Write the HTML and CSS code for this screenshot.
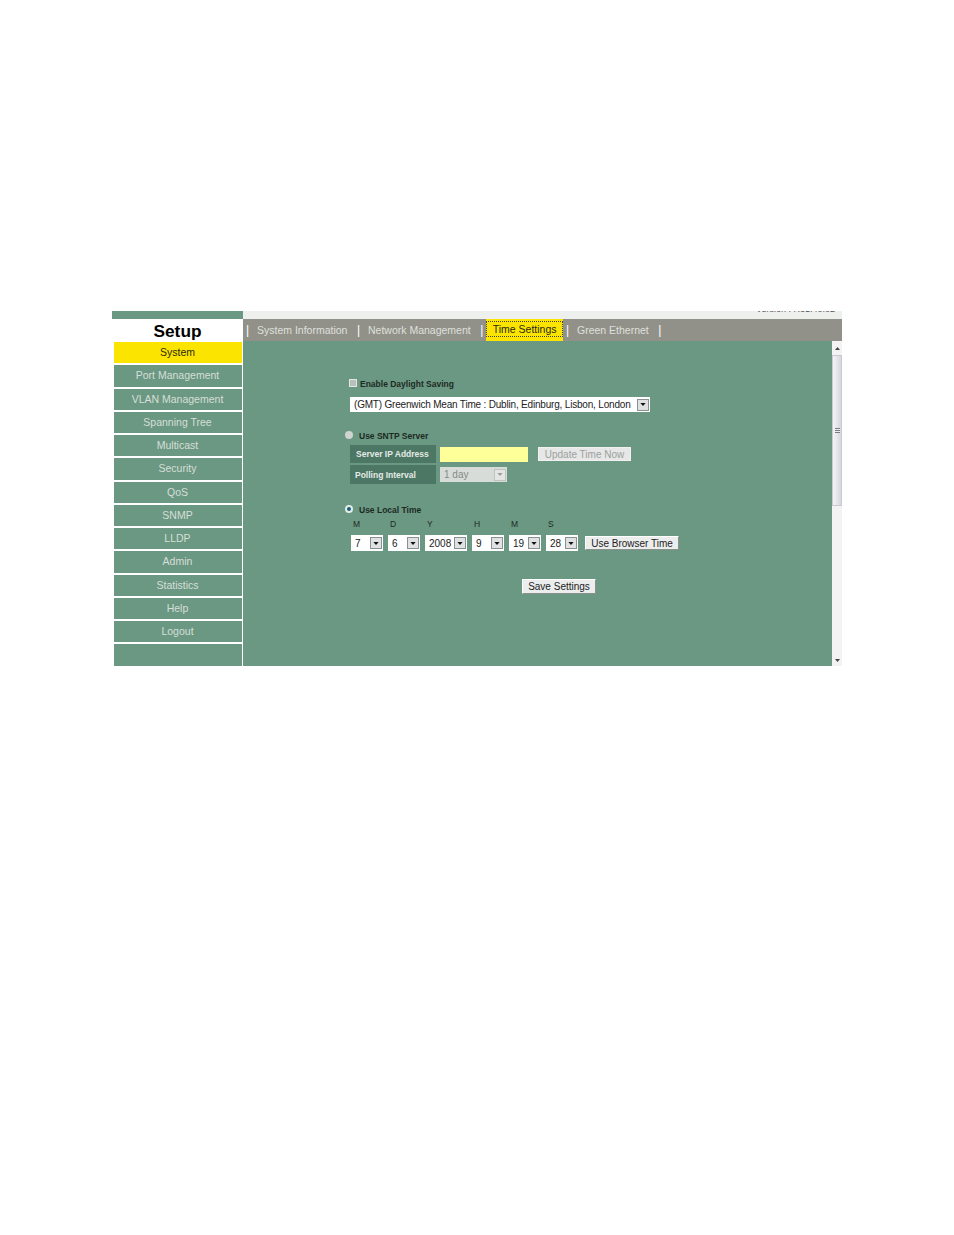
FILE: index.html
```html
<!DOCTYPE html>
<html>
<head>
    <title>Setup - Time Settings</title>
    <link rel="stylesheet" href="styles.css">
</head>
<body>
    <div class="frame">
        <div class="sidebar">
            <div class="side-strip"></div>
            <div class="side-title">Setup</div>
            <a class="side-item active">System</a>
            <a class="side-item">Port Management</a>
            <a class="side-item">VLAN Management</a>
            <a class="side-item">Spanning Tree</a>
            <a class="side-item">Multicast</a>
            <a class="side-item">Security</a>
            <a class="side-item">QoS</a>
            <a class="side-item">SNMP</a>
            <a class="side-item">LLDP</a>
            <a class="side-item">Admin</a>
            <a class="side-item">Statistics</a>
            <a class="side-item">Help</a>
            <a class="side-item">Logout</a>
            <div class="side-rest"></div>
        </div>
        <div class="main">
            <div class="version-strip"><span class="version">Version : R31.40.02</span></div>
            <div class="tabs">
                <span class="sep">|</span>
                <a class="tab">System Information</a>
                <span class="sep">|</span>
                <a class="tab">Network Management</a>
                <span class="sep">|</span>
                <a class="tab tab-active"><span class="tab-focus">Time Settings</span></a>
                <span class="sep">|</span>
                <a class="tab">Green Ethernet</a>
                <span class="sep">|</span>
            </div>
            <div class="body-row">
                <div class="content">
                    <div class="option first-option">
                        <span class="check"></span>
                        <span class="option-label">Enable Daylight Saving</span>
                    </div>
                    <div class="select select-zone">
                        <span class="select-value">(GMT) Greenwich Mean Time : Dublin, Edinburg, Lisbon, London</span>
                        <span class="arrow"><svg viewBox="0 0 7 4"><path d="M0 0h7L3.5 4z"/></svg></span>
                    </div>

                    <div class="option sntp-option">
                        <span class="radio"></span>
                        <span class="option-label">Use SNTP Server</span>
                    </div>
                    <div class="field-row field-server">
                        <div class="field-label">Server IP Address</div>
                        <div class="text-input"></div>
                        <div class="btn btn-disabled btn-update">Update Time Now</div>
                    </div>
                    <div class="field-row field-poll">
                        <div class="field-label field-label-poll">Polling Interval</div>
                        <div class="select select-disabled select-poll">
                            <span class="select-value">1 day</span>
                            <span class="arrow"><svg viewBox="0 0 7 4"><path d="M0 0h7L3.5 4z"/></svg></span>
                        </div>
                    </div>

                    <div class="option local-option">
                        <span class="radio radio-on"></span>
                        <span class="option-label">Use Local Time</span>
                    </div>
                    <div class="time-labels">
                        <span class="time-label">M</span>
                        <span class="time-label">D</span>
                        <span class="time-label time-label-year">Y</span>
                        <span class="time-label">H</span>
                        <span class="time-label">M</span>
                        <span class="time-label">S</span>
                    </div>
                    <div class="time-row">
                        <div class="select select-time"><span class="select-value">7</span><span class="arrow"><svg viewBox="0 0 7 4"><path d="M0 0h7L3.5 4z"/></svg></span></div>
                        <div class="select select-time"><span class="select-value">6</span><span class="arrow"><svg viewBox="0 0 7 4"><path d="M0 0h7L3.5 4z"/></svg></span></div>
                        <div class="select select-time select-year"><span class="select-value">2008</span><span class="arrow"><svg viewBox="0 0 7 4"><path d="M0 0h7L3.5 4z"/></svg></span></div>
                        <div class="select select-time"><span class="select-value">9</span><span class="arrow"><svg viewBox="0 0 7 4"><path d="M0 0h7L3.5 4z"/></svg></span></div>
                        <div class="select select-time"><span class="select-value">19</span><span class="arrow"><svg viewBox="0 0 7 4"><path d="M0 0h7L3.5 4z"/></svg></span></div>
                        <div class="select select-time"><span class="select-value">28</span><span class="arrow"><svg viewBox="0 0 7 4"><path d="M0 0h7L3.5 4z"/></svg></span></div>
                        <div class="btn btn-browser">Use Browser Time</div>
                    </div>
                    <div class="btn btn-save">Save Settings</div>
                </div>
                <div class="scrollbar">
                    <div class="scroll-end scroll-up"><svg viewBox="0 0 7 4"><path d="M0 4h7L3.5 0z"/></svg></div>
                    <div class="scroll-thumb">
                        <span class="grip"></span>
                    </div>
                    <div class="scroll-track"></div>
                    <div class="scroll-end"><svg viewBox="0 0 7 4"><path d="M0 0h7L3.5 4z"/></svg></div>
                </div>
            </div>
        </div>
    </div>
</body>
</html>
```

FILE: styles.css
```css
body {
    background-color: #fff;
    color: #1d2a24;
    font-family: "Liberation Sans", Arial, sans-serif;
    margin: 0;
    padding: 311px 0 0 112px;
}

.frame {
    display: flex;
    width: 730px;
    height: 355px;
}

.sidebar {
    display: flex;
    flex-direction: column;
    width: 131px;
    flex-shrink: 0;
}

.side-strip {
    height: 8px;
    background-color: #6b9882;
}

.side-title {
    height: 23px;
    line-height: 24px;
    text-align: center;
    font-size: 17.3px;
    font-weight: bold;
    color: #000;
}

.side-item {
    display: block;
    box-sizing: border-box;
    height: 21.25px;
    line-height: 21.5px;
    padding-right: 1px;
    margin: 0 1px 2px 2px;
    background-color: #6b9882;
    color: #d6dfd9;
    text-align: center;
    font-size: 10.5px;
}

.side-item.active {
    background-color: #fbe400;
    color: #2a2a10;
}

.side-rest {
    flex: 1;
    margin: 0 1px 0 2px;
    background-color: #6b9882;
}

.main {
    flex: 1;
    display: flex;
    flex-direction: column;
    min-width: 0;
}

.version-strip {
    height: 8px;
    background-color: #eef0ee;
    overflow: hidden;
    text-align: right;
    padding-right: 7px;
}

.version {
    display: block;
    margin-top: -6px;
    font-size: 9px;
    line-height: 9px;
    color: #555;
}

.tabs {
    display: flex;
    align-items: center;
    height: 22px;
    padding-left: 3px;
    background-color: #919189;
    font-size: 10.5px;
    color: #dfe0dc;
}

.sep {
    width: 2px;
    color: #fff;
    font-size: 12px;
}

.tab {
    padding: 0 9.5px 0 9px;
    white-space: nowrap;
}

.tab-active {
    align-self: stretch;
    display: flex;
    margin: 0 3px 0 4px;
    padding: 0;
    background-color: #fbe400;
    color: #2a2a10;
}

.tab-focus {
    display: flex;
    align-items: center;
    margin: 2px 0 4px;
    padding: 0 5.5px;
    border: 1px dotted #444;
}

.body-row {
    flex: 1;
    display: flex;
    min-height: 0;
}

.content {
    flex: 1;
    background-color: #6b9882;
    padding-left: 102px;
    font-size: 9px;
}

.option {
    display: flex;
    align-items: center;
    height: 10px;
    font-weight: bold;
    font-size: 8.5px;
}

.first-option {
    margin-top: 38px;
    padding-left: 4px;
}

.sntp-option {
    margin-top: 19px;
}

.local-option {
    margin-top: 21px;
}

.option-label {
    margin-left: 5px;
}

.check {
    width: 8px;
    height: 8px;
    margin-top: -3px;
    margin-right: -2px;
    background-color: #b9bfbb;
    border: 1px solid #e3e6e3;
    box-sizing: border-box;
}

.radio {
    width: 8px;
    height: 8px;
    margin-right: 1px;
    margin-top: -2px;
    border-radius: 50%;
    background-color: #cfd4d0;
}

.radio-on {
    background-color: #17607c;
    border: 2px solid #e6ecea;
    box-sizing: border-box;
}

.select {
    display: flex;
    align-items: center;
    justify-content: space-between;
    box-sizing: border-box;
    height: 16px;
    padding: 0 1px 0 4px;
    background-color: #fff;
    color: #222;
    font-size: 10px;
    white-space: nowrap;
}

.select-zone {
    width: 300px;
    height: 15px;
    margin: 8px 0 0 5px;
    letter-spacing: -0.19px;
}

.arrow {
    display: flex;
    align-items: center;
    justify-content: center;
    width: 12px;
    height: 12px;
    background-color: #dfe1e2;
    border: 1px solid #8a8f90;
    box-sizing: border-box;
}

.arrow svg {
    width: 6px;
    height: 3px;
    fill: #111;
}

.field-row {
    display: flex;
    align-items: center;
    margin-left: 5px;
}

.field-server {
    margin-top: 4px;
    height: 18px;
}

.field-poll {
    margin-top: 2px;
    height: 19px;
}

.field-label {
    align-self: stretch;
    display: flex;
    align-items: center;
    width: 86px;
    padding-left: 6px;
    box-sizing: border-box;
    background-color: #4d7765;
    color: #e4eae6;
    font-size: 8.5px;
    font-weight: bold;
}

.field-label-poll {
    padding-left: 5px;
}

.text-input {
    width: 88px;
    height: 15px;
    margin-left: 4px;
    background-color: #ffff99;
}

.btn {
    display: flex;
    align-items: center;
    justify-content: center;
    box-sizing: border-box;
    background-color: #eceded;
    border: 1px solid #fff;
    border-right-color: #8b908d;
    border-bottom-color: #8b908d;
    color: #222;
    font-size: 10px;
    white-space: nowrap;
}

.btn-disabled {
    background-color: #e6e7e6;
    border-color: #f0f1f0;
    color: #9c9f9d;
}

.btn-update {
    width: 93px;
    height: 14px;
    margin-left: 10px;
}

.select-disabled {
    background-color: #d8dcd9;
    color: #858a87;
}

.select-disabled .arrow {
    background-color: #e4e6e4;
    border-color: #c0c4c1;
}

.select-disabled .arrow svg {
    fill: #9a9e9b;
}

.select-poll {
    width: 67px;
    height: 15px;
    margin-left: 4px;
}

.time-labels {
    display: flex;
    margin: 4px 0 0 8px;
    height: 10px;
    line-height: 10px;
    font-size: 8.5px;
}

.time-label {
    width: 37px;
}

.time-label-year {
    width: 47px;
}

.time-row {
    display: flex;
    align-items: center;
    gap: 5px;
    margin: 6px 0 0 6px;
}

.select-time {
    width: 32px;
}

.select-year {
    width: 42px;
}

.btn-browser {
    width: 94px;
    height: 14px;
    margin-left: 2px;
}

.btn-save {
    width: 74px;
    height: 15px;
    margin: 28px 0 0 177px;
}

.scrollbar {
    display: flex;
    flex-direction: column;
    width: 10px;
    flex-shrink: 0;
    background-color: #f3f3f4;
}

.scroll-end {
    display: flex;
    align-items: center;
    justify-content: center;
    height: 12px;
}

.scroll-up {
    height: 14px;
}

.scroll-end svg {
    width: 5px;
    height: 3px;
    fill: #444;
}

.scroll-thumb {
    display: flex;
    align-items: center;
    justify-content: center;
    height: 151px;
    background: linear-gradient(to right, #f4f4f8, #d6d7df);
    border: 1px solid #c9cad0;
    box-sizing: border-box;
}

.grip {
    width: 5px;
    height: 5px;
    background: repeating-linear-gradient(to bottom, #77797c 0, #77797c 1px, #eee 1px, #eee 2px);
}

.scroll-track {
    flex: 1;
}
```
